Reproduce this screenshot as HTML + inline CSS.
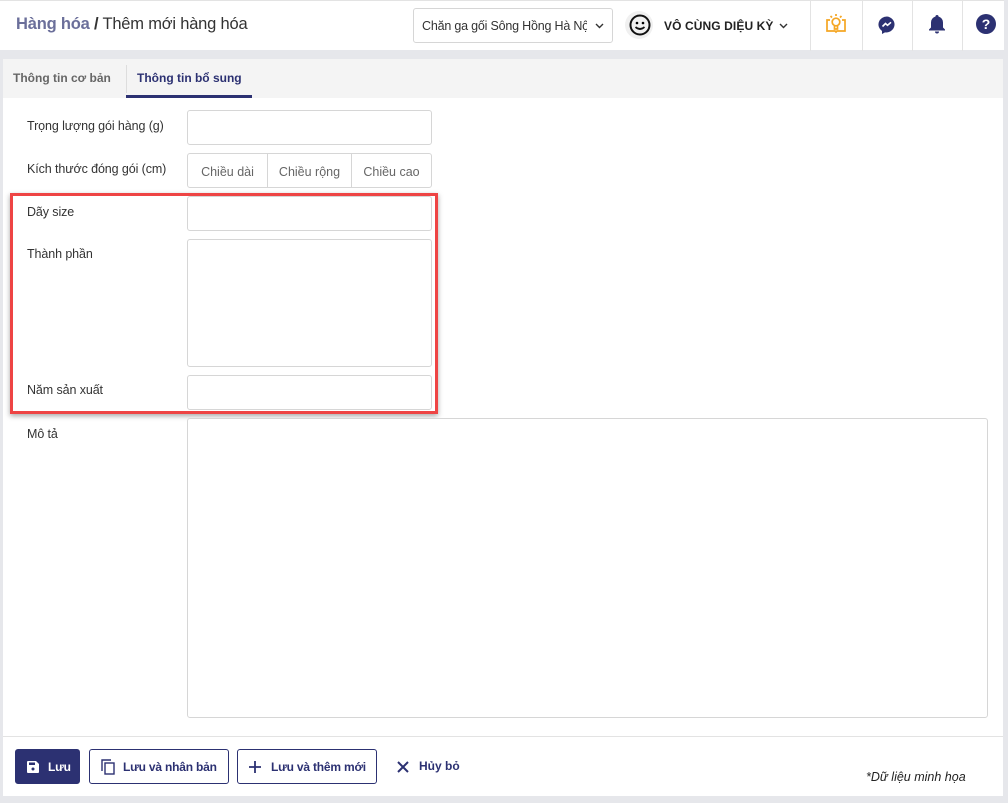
<!DOCTYPE html>
<html><head><meta charset="utf-8"><style>
*{box-sizing:border-box;margin:0;padding:0}
body{width:1008px;height:803px;background:#e6e7eb;font-family:"Liberation Sans",sans-serif;position:relative;overflow:hidden;color:#333}
.abs{position:absolute}
.hdr{left:0;top:0;width:1004px;height:50px;background:#fff;border-top:1px solid #e3e3e3}
.inp{position:absolute;border:1px solid #d6d6d6;border-radius:3px;background:#fff}
.lbl{position:absolute;font-size:12.5px;color:#333;letter-spacing:-0.1px}
.sep{position:absolute;top:0;width:1px;height:50px;background:#e3e3e3}
.btn{position:absolute;top:749px;height:35px;border:1px solid #2c3172;border-radius:3px;font-size:12px;font-weight:bold;color:#2c3172;display:flex;align-items:center;letter-spacing:-0.2px}
</style></head><body>
<div class="abs hdr">
 <div class="abs" style="left:16px;top:14px;font-size:16.5px;letter-spacing:-0.2px"><span style="color:#6b6f9a;font-weight:bold">Hàng hóa</span> <b style="color:#333">/</b> Thêm mới hàng hóa</div>
 <div class="inp" style="left:413px;top:7px;width:200px;height:35px;font-size:12.5px;padding:10px 8px;white-space:nowrap;overflow:hidden;letter-spacing:-0.2px"><span style="display:inline-block;width:165px;overflow:hidden;vertical-align:top">Chăn ga gối Sông Hồng Hà Nội</span><svg style="position:absolute;right:8px;top:14px" width="9" height="6" viewBox="0 0 9 6"><path d="M1 1l3.5 3.5L8 1" fill="none" stroke="#333" stroke-width="1.4"/></svg></div>
 <div class="abs" style="left:625px;top:10px;width:28px;height:28px;border-radius:50%;background:#f0f0f0"></div>
 <svg class="abs" style="left:629px;top:13px" width="22" height="22" viewBox="0 0 22 22"><circle cx="11" cy="11" r="9.5" fill="none" stroke="#111" stroke-width="2"/><circle cx="8" cy="9" r="1.3"/><circle cx="14" cy="9" r="1.3"/><path d="M6.5 13q4.5 4 9 0" fill="none" stroke="#111" stroke-width="1.8"/></svg>
 <div class="abs" style="left:664px;top:18px;font-size:12px;font-weight:bold;color:#222;letter-spacing:0.1px">VÔ CÙNG DIỆU KỲ</div>
 <svg class="abs" style="left:779px;top:22px" width="9" height="6" viewBox="0 0 9 6"><path d="M1 1l3.5 3.5L8 1" fill="none" stroke="#333" stroke-width="1.4"/></svg>
 <div class="sep" style="left:810px"></div><div class="sep" style="left:862px"></div><div class="sep" style="left:912px"></div><div class="sep" style="left:962px"></div>
 <svg class="abs" style="left:824px;top:10px" width="24" height="24" viewBox="0 0 24 24" fill="none" stroke="#f5a623" stroke-width="1.7"><path d="M6 9H3v11h8l1 1 1-1h8V9h-3"/><circle cx="12" cy="11" r="3.8"/><path d="M10.5 15v3h3v-3M12 3v2M6.5 5l1.5 1.5M17.5 5L16 6.5"/></svg>
 <svg class="abs" style="left:877px;top:14px" width="20" height="20" viewBox="0 0 20 20"><path d="M10 1.5a8.5 8 0 0 0-5 14.5v3l3-1.6A8.5 8 0 1 0 10 1.5z" fill="#2c3172"/><path d="M5.5 11.5l3-3 2 1.8 3.5-3" fill="none" stroke="#fff" stroke-width="1.6"/></svg>
 <svg class="abs" style="left:928px;top:13px" width="18" height="20" viewBox="0 0 18 20"><path d="M9 1a1.5 1.5 0 0 1 1.5 1.5A6 6 0 0 1 15 8.5v5l2 2v1H1v-1l2-2v-5A6 6 0 0 1 7.5 2.5 1.5 1.5 0 0 1 9 1zM7 17.5h4a2 2 0 0 1-4 0z" fill="#2c3172"/></svg>
 <div class="abs" style="left:976px;top:13px;width:20px;height:20px;border-radius:50%;background:#2c3172;color:#fff;font-size:14px;font-weight:bold;text-align:center;line-height:20px">?</div>
</div>
<div class="abs" style="left:3px;top:59px;width:1000px;height:737px;background:#fff"></div>
<div class="abs" style="left:3px;top:59px;width:1000px;height:39px;background:#f4f4f4"></div>
<div class="abs" style="left:13px;top:71px;font-size:12px;font-weight:bold;color:#666">Thông tin cơ bản</div>
<div class="abs" style="left:126px;top:65px;width:1px;height:28px;background:#ddd"></div>
<div class="abs" style="left:137px;top:71px;font-size:12px;font-weight:bold;color:#2c3172">Thông tin bổ sung</div>
<div class="abs" style="left:126px;top:95px;width:126px;height:3px;background:#2c3172"></div>

<div class="lbl" style="left:27px;top:119px">Trọng lượng gói hàng (g)</div>
<div class="inp" style="left:187px;top:110px;width:245px;height:35px"></div>
<div class="lbl" style="left:27px;top:162px">Kích thước đóng gói (cm)</div>
<div class="inp" style="left:187px;top:153px;width:245px;height:35px;display:flex;font-size:12.5px;color:#666">
 <div style="width:80px;border-right:1px solid #d6d6d6;text-align:center;padding-top:11px">Chiều dài</div>
 <div style="width:84px;border-right:1px solid #d6d6d6;text-align:center;padding-top:11px">Chiều rộng</div>
 <div style="flex:1;text-align:center;padding-top:11px">Chiều cao</div></div>
<div class="lbl" style="left:27px;top:205px">Dãy size</div>
<div class="inp" style="left:187px;top:196px;width:245px;height:35px"></div>
<div class="lbl" style="left:27px;top:247px">Thành phần</div>
<div class="inp" style="left:187px;top:239px;width:245px;height:128px"></div>
<div class="lbl" style="left:27px;top:383px">Năm sản xuất</div>
<div class="inp" style="left:187px;top:375px;width:245px;height:35px"></div>
<div class="abs" style="left:10px;top:193px;width:428px;height:221px;border:3px solid #ee4444;box-shadow:0 2px 5px rgba(0,0,0,.35)"></div>
<div class="lbl" style="left:27px;top:427px">Mô tả</div>
<div class="inp" style="left:187px;top:418px;width:801px;height:300px"></div>
<div class="abs" style="left:3px;top:736px;width:1000px;height:1px;background:#e3e3e3"></div>

<div class="btn" style="left:15px;width:65px;background:#2c3172;color:#fff;padding-left:11px"><svg width="12" height="12" viewBox="0 0 12 12"><path d="M0 1a1 1 0 0 1 1-1h8l3 3v8a1 1 0 0 1-1 1H1a1 1 0 0 1-1-1z" fill="#fff"/><rect x="2" y="1.5" width="6" height="2.5" fill="#2c3172"/><circle cx="6" cy="8" r="1.5" fill="#2c3172"/></svg><span style="margin-left:9px">Lưu</span></div>
<div class="btn" style="left:89px;width:140px;padding-left:11px"><svg width="14" height="16" viewBox="0 0 14 16" fill="none" stroke="#2c3172" stroke-width="1.4"><path d="M1 12V1h9"/><rect x="4" y="4" width="9" height="11"/></svg><span style="margin-left:8px">Lưu và nhân bản</span></div>
<div class="btn" style="left:237px;width:140px;padding-left:11px"><svg width="12" height="12" viewBox="0 0 12 12"><path d="M6 0v12M0 6h12" stroke="#2c3172" stroke-width="1.8"/></svg><span style="margin-left:10px">Lưu và thêm mới</span></div>
<svg class="abs" style="left:397px;top:761px" width="12" height="12" viewBox="0 0 12 12"><path d="M1 1l10 10M11 1L1 11" stroke="#2c3172" stroke-width="2"/></svg>
<div class="abs" style="left:419px;top:759px;font-size:12px;font-weight:bold;color:#2c3172">Hủy bỏ</div>
<div class="abs" style="left:866px;top:770px;font-size:12.5px;font-style:italic;color:#222">*Dữ liệu minh họa</div>
</body></html>
